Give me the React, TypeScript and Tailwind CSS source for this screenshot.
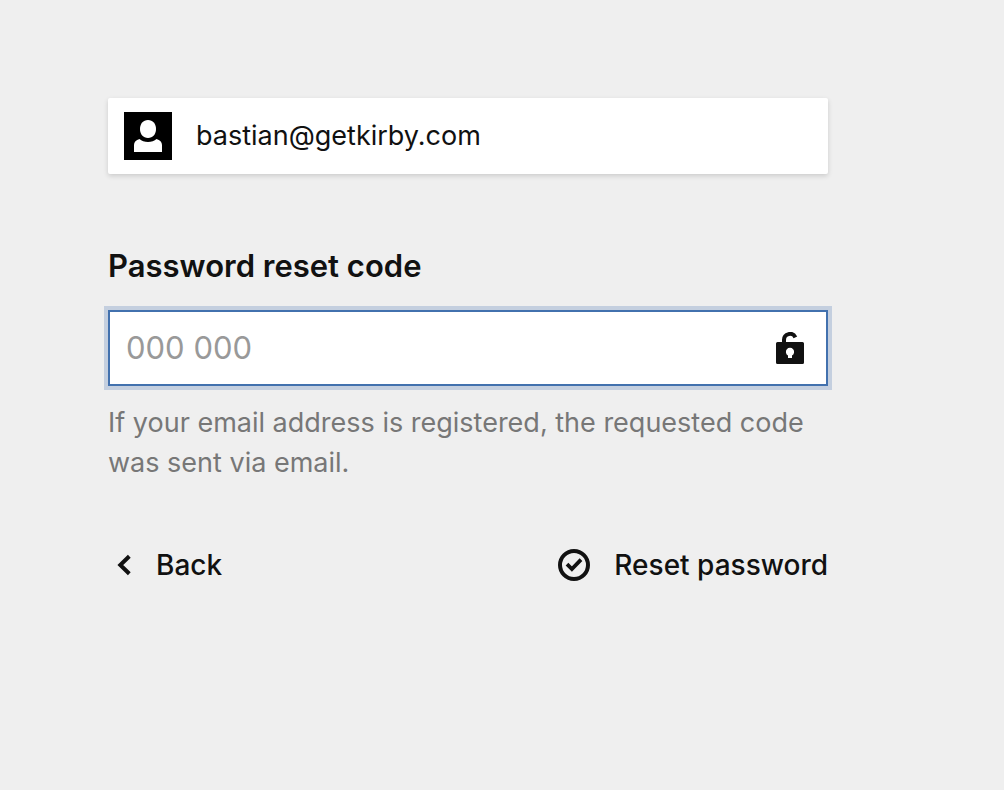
export default function App() {
  return (
    <main className="min-h-screen bg-[#efefef] pt-[98px] pr-[176px] pl-[108px] font-['Inter',sans-serif] text-[#111]">
      <form className="flex flex-col" onSubmit={(e) => e.preventDefault()}>
        <div className="flex h-[76px] items-center gap-6 rounded-xs bg-white px-4 text-[27px] shadow-[0_2px_5px_rgba(0,0,0,0.15)]">
          <svg className="size-12" viewBox="0 0 48 48" aria-hidden="true">
            <rect width="48" height="48" fill="#000" />
            <path d="M24 8C28.8 8 32 11.8 32 17S28.8 26 24 26S16 22.2 16 17S19.2 8 24 8Z" fill="#fff" />
            <path d="M15.5 27C19.5 31 28.5 31 32.5 27C36 28 38 30 38 33V40H10V33C10 30 12 28 15.5 27Z" fill="#fff" />
          </svg>
          <span>bastian@getkirby.com</span>
        </div>
        <label htmlFor="code" className="mt-[72px] text-[31px] leading-10 font-semibold">
          Password reset code
        </label>
        <div className="mt-6 flex h-[76px] items-center border-2 border-[#4271ae] bg-white pr-5 pl-4 ring-4 ring-[#4271ae]/25">
          <input id="code" type="text" placeholder="000 000" className="min-w-0 flex-1 bg-transparent text-[31px] outline-none placeholder:text-[#999]" />
          <svg className="size-8" viewBox="0 0 32 32" aria-hidden="true">
            <path d="M10 11V8A6 6 0 0 1 21.4 5.3" fill="none" stroke="#111" strokeWidth="4" />
            <path
              fillRule="evenodd"
              d="M3.5 10H28.5A1.5 1.5 0 0 1 30 11.5V30.5A1.5 1.5 0 0 1 28.5 32H3.5A1.5 1.5 0 0 1 2 30.5V11.5A1.5 1.5 0 0 1 3.5 10ZM14 23.5V26H18V23.5A4.1 4.1 0 1 0 14 23.5Z"
              fill="#111"
            />
          </svg>
        </div>
        <p className="mt-[17px] text-[27px] leading-10 text-[#777]">If your email address is registered, the requested code was sent via email.</p>
        <div className="mt-[61px] flex items-center justify-between text-[28px] font-medium">
          <button type="button" className="flex items-center gap-4">
            <svg className="size-8" viewBox="0 0 32 32" aria-hidden="true">
              <path d="M21.3 7.2L12.3 16L21.3 24.8" fill="none" stroke="#111" strokeWidth="4" />
            </svg>
            Back
          </button>
          <button type="submit" className="flex items-center gap-6">
            <svg className="size-8" viewBox="0 0 32 32" aria-hidden="true">
              <circle cx="16" cy="16" r="14" fill="none" stroke="#111" strokeWidth="4" />
              <path d="M9 15.2L13.9 20L23 10.7" fill="none" stroke="#111" strokeWidth="3.8" />
            </svg>
            Reset password
          </button>
        </div>
      </form>
    </main>
  )
}
